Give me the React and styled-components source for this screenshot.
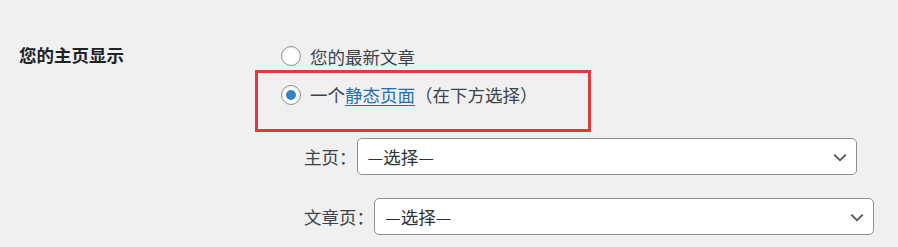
import React from "react";
import styled, { createGlobalStyle } from "styled-components";

const GlobalStyle = createGlobalStyle`
  html, body {
    margin: 0;
    padding: 0;
    background: #f0f0f1;
  }
  body {
    font-family: "Noto Sans CJK SC", "Microsoft YaHei", sans-serif;
    color: #3c434a;
  }
`;

const Page = styled.div`
  width: 898px;
  height: 247px;
  overflow: hidden;
  box-sizing: border-box;
  padding-left: 19px;
  background: #f0f0f1;
`;

const FormRow = styled.div`
  display: flex;
  align-items: flex-start;
`;

const RowHeading = styled.div`
  width: 262px;
  flex: none;
  padding-top: 42px;
  font-size: 17.5px;
  line-height: 25px;
  font-weight: 700;
  color: #1d2327;
`;

const RowField = styled.div`
  display: flex;
  flex-direction: column;
  padding-top: 43.5px;
`;

const RadioList = styled.div`
  display: flex;
  flex-direction: column;
  gap: 13.5px;
`;

const RadioOption = styled.label`
  position: relative;
  display: flex;
  align-items: center;
  height: 25px;
  font-size: 17.5px;
  line-height: 25px;
  color: #3c434a;
  white-space: nowrap;
`;

const RadioCircle = styled.span`
  position: relative;
  box-sizing: border-box;
  width: 20px;
  height: 20px;
  flex: none;
  margin-right: 9px;
  border: 1px solid #8c8f94;
  border-radius: 50%;
  background: #fff;
  box-shadow: inset 0 1px 2px rgba(0, 0, 0, 0.08);

  &::after {
    content: "";
    display: ${(p) => (p.$checked ? "block" : "none")};
    position: absolute;
    left: 50%;
    top: 50%;
    width: 10px;
    height: 10px;
    margin: -5px 0 0 -5px;
    border-radius: 50%;
    background: #3582c4;
  }
`;

const InlineLink = styled.a`
  color: #2271b1;
  text-decoration: underline;
  text-underline-offset: 3px;
  text-decoration-thickness: 1px;
`;

const Highlight = styled.span`
  position: absolute;
  left: -26px;
  top: -12px;
  width: 336px;
  height: 62px;
  box-sizing: border-box;
  border: 3px solid #e0393e;
  pointer-events: none;
`;

const SubList = styled.div`
  display: flex;
  flex-direction: column;
  gap: 23px;
  margin-top: 31px;
  padding-left: 23px;
`;

const SelectRow = styled.label`
  display: flex;
  align-items: center;
  font-size: 17.5px;
  line-height: 25px;
  color: #3c434a;
  white-space: nowrap;
`;

const SelectBox = styled.div`
  box-sizing: border-box;
  width: 500px;
  height: 37px;
  display: flex;
  align-items: center;
  justify-content: space-between;
  padding: 0 6px 0 10px;
  background: #fff;
  border: 1px solid #8c8f94;
  border-radius: 5px;
  font-size: 17.5px;
  color: #2c3338;
`;

const Chevron = () => (
  <svg width="20" height="20" viewBox="0 0 20 20" aria-hidden="true">
    <path d="M5 7l5 5 5-5 1.4 1.2L10 14.4 3.6 8.2z" fill="#50575e" />
  </svg>
);

const Select = ({ value }) => (
  <SelectBox>
    <span>{value}</span>
    <Chevron />
  </SelectBox>
);

export default function App() {
  return (
    <>
      <GlobalStyle />
      <Page>
        <FormRow>
          <RowHeading>您的主页显示</RowHeading>
          <RowField>
            <RadioList>
              <RadioOption>
                <RadioCircle />
                您的最新文章
              </RadioOption>
              <RadioOption>
                <RadioCircle $checked />
                一个<InlineLink href="#">静态页面</InlineLink>（在下方选择）
                <Highlight />
              </RadioOption>
            </RadioList>
            <SubList>
              <SelectRow>
                主页：<Select value="—选择—" />
              </SelectRow>
              <SelectRow>
                文章页：<Select value="—选择—" />
              </SelectRow>
            </SubList>
          </RowField>
        </FormRow>
      </Page>
    </>
  );
}
